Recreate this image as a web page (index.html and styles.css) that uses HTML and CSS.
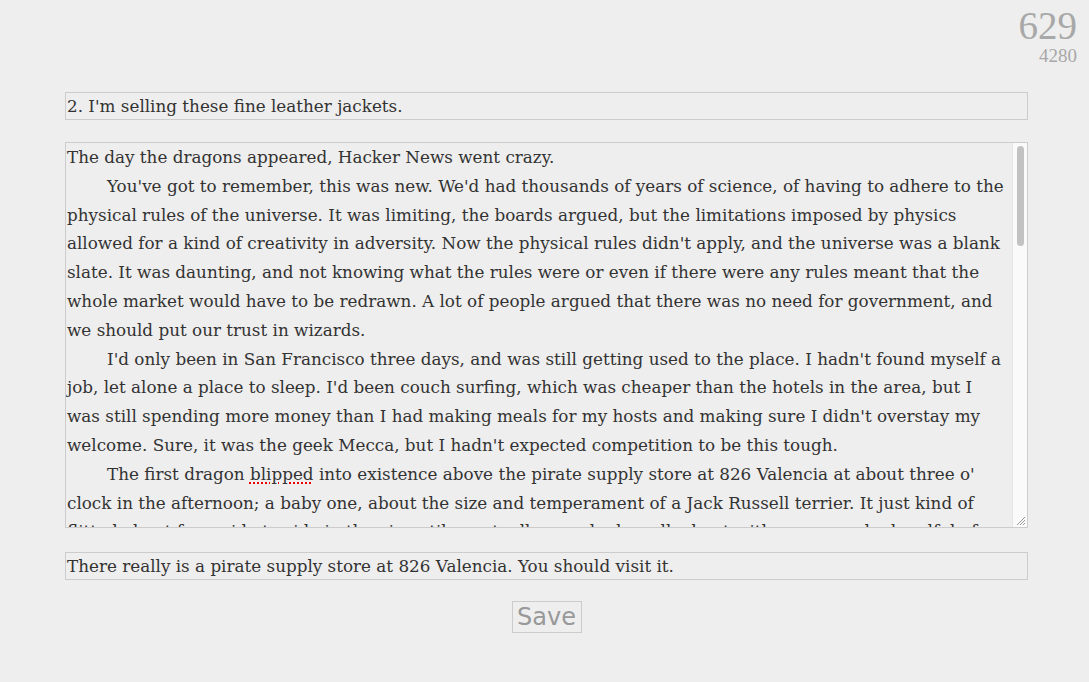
FILE: index.html
```html
<!DOCTYPE html>
<html>
<head>
<meta charset="utf-8">
<link rel="stylesheet" href="styles.css">
</head>
<body>
<div class="counter">
  <div class="count-big">629</div>
  <div class="count-small">4280</div>
</div>
<main class="editor">
  <div class="field">2. I'm selling these fine leather jackets.</div>
  <div class="story">
    <div class="story-text">
      <p class="first">The day the dragons appeared, Hacker News went crazy.</p>
      <p>You've got to remember, this was new. We'd had thousands of years of science, of having to adhere to the physical rules of the universe. It was limiting, the boards argued, but the limitations imposed by physics allowed for a kind of creativity in adversity. Now the physical rules didn't apply, and the universe was a blank slate. It was daunting, and not knowing what the rules were or even if there were any rules meant that the whole market would have to be redrawn. A lot of people argued that there was no need for government, and we should put our trust in wizards.</p>
      <p>I'd only been in San Francisco three days, and was still getting used to the place. I hadn't found myself a job, let alone a place to sleep. I'd been couch surfing, which was cheaper than the hotels in the area, but I was still spending more money than I had making meals for my hosts and making sure I didn't overstay my welcome. Sure, it was the geek Mecca, but I hadn't expected competition to be this tough.</p>
      <p>The first dragon <span class="spell">blipped</span> into existence above the pirate supply store at 826 Valencia at about three o' clock in the afternoon; a baby one, about the size and temperament of a Jack Russell terrier. It just kind of flitted about from side to side in the air until eventually somebody walked out with a cage and a handful of treats and coaxed it down to the ground.</p>
    </div>
    <div class="scrollbar"><div class="thumb"></div></div>
    <svg class="grip" width="12" height="12" viewBox="0 0 12 12"><path d="M11 3 L3 11 M11 6 L6 11 M11 9 L9 11" stroke="#999" stroke-width="1" fill="none"/></svg>
  </div>
  <div class="field">There really is a pirate supply store at 826 Valencia. You should visit it.</div>
  <div class="actions"><button class="save">Save</button></div>
</main>
</body>
</html>
```
FILE: styles.css
```css
html, body {
  margin: 0;
  padding: 0;
  background: #eeeeee;
}
body {
  font-family: "DejaVu Serif", serif;
  color: #333;
}
.counter {
  position: absolute;
  top: 6px;
  right: 12px;
  text-align: right;
  font-family: "Liberation Serif", serif;
  color: #a8a8a8;
}
.count-big {
  font-size: 39px;
  line-height: 40px;
}
.count-small {
  font-size: 19px;
  line-height: 20px;
}
.editor {
  width: 963px;
  margin: 0 0 0 65px;
  padding-top: 92px;
  display: flex;
  flex-direction: column;
}
.field {
  box-sizing: border-box;
  height: 28px;
  border: 1px solid #ccc;
  padding: 0 1px;
  font-size: 16.8px;
  line-height: 27px;
  white-space: nowrap;
  overflow: hidden;
}
.story {
  position: relative;
  box-sizing: border-box;
  height: 386px;
  margin: 22px 0 24px;
  border: 1px solid #ccc;
  display: flex;
  overflow: hidden;
}
.story-text {
  flex: 1;
  padding: 0 4px 0 1px;
  font-size: 16.8px;
  line-height: 28.8px;
  overflow: hidden;
}
.story p {
  margin: 0;
  text-indent: 40px;
}
.story p.first {
  text-indent: 0;
}
.spell {
  text-decoration: underline dotted #e00;
  text-decoration-thickness: 2px;
  text-underline-offset: 3px;
}
.scrollbar {
  flex: none;
  width: 15px;
  background: #fafafa;
  border-left: 1px solid #e6e6e6;
  padding: 3px 3px 0 4px;
  box-sizing: border-box;
}
.thumb {
  height: 100px;
  background: #c2c2c2;
  border-radius: 4px;
}
.grip {
  position: absolute;
  right: 1px;
  bottom: 1px;
  background: #fafafa;
}
.actions {
  display: flex;
  justify-content: center;
  padding-top: 21px;
}
.save {
  width: 70px;
  height: 32px;
  border: 1px solid #ccc;
  background: #eeeeee;
  color: #999;
  font-family: "DejaVu Sans", sans-serif;
  font-size: 24px;
  line-height: 28px;
  padding: 0;
}
```
